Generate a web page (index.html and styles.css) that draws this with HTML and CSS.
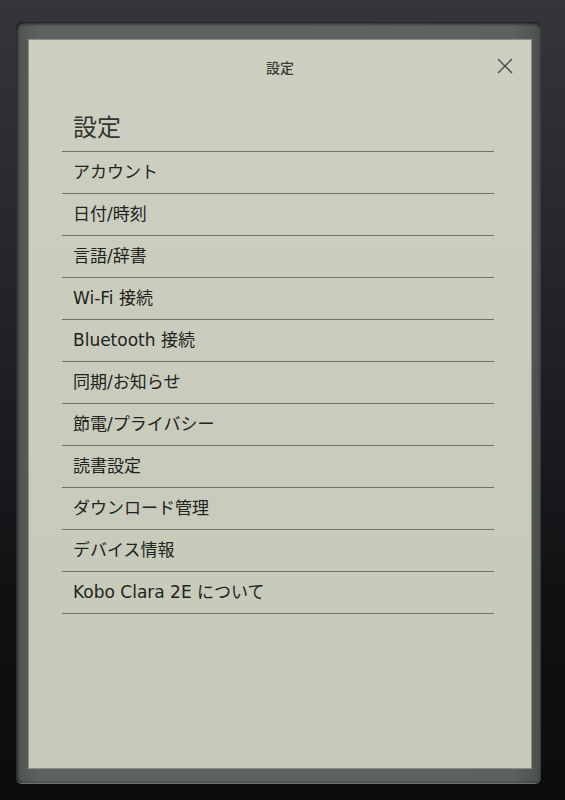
FILE: index.html
```html
<!DOCTYPE html>
<html lang="ja">
<head>
<meta charset="utf-8">
<link rel="stylesheet" href="styles.css">
</head>
<body>
<div class="device">
  <div class="bezel">
    <div class="screen">
      <div class="topbar">
        <span class="topbar-title">設定</span>
        <svg class="close" viewBox="0 0 18 18" width="18" height="18"><path d="M2 2 L16 16 M16 2 L2 16" stroke="#4a4c48" stroke-width="1.4" fill="none"/></svg>
      </div>
      <div class="list">
        <div class="heading">設定</div>
        <div class="row">アカウント</div>
        <div class="row">日付/時刻</div>
        <div class="row">言語/辞書</div>
        <div class="row">Wi-Fi 接続</div>
        <div class="row">Bluetooth 接続</div>
        <div class="row">同期/お知らせ</div>
        <div class="row">節電/プライバシー</div>
        <div class="row">読書設定</div>
        <div class="row">ダウンロード管理</div>
        <div class="row">デバイス情報</div>
        <div class="row">Kobo Clara 2E について</div>
      </div>
    </div>
  </div>
</div>
</body>
</html>
```

FILE: styles.css
```css
html, body {
  margin: 0;
  padding: 0;
  width: 565px;
  height: 800px;
  overflow: hidden;
}
body {
  background: linear-gradient(180deg, #35353a 0%, #232327 40%, #111114 75%, #0c0c0e 100%);
  font-family: "DejaVu Sans", "Noto Sans CJK JP", sans-serif;
}
.device {
  box-sizing: border-box;
  width: 565px;
  height: 800px;
  padding: 22px 24px 17px 16px;
}
.bezel {
  box-sizing: border-box;
  height: 100%;
  background: linear-gradient(90deg, #4e5250 0%, #5e6260 5%, #5c605e 95%, #4a4e4c 100%);
  border-radius: 6px;
  box-shadow: inset 0 2px 3px rgba(0,0,0,0.55), inset 2px 0 3px rgba(0,0,0,0.4), 0 1px 0 #6c706e;
  padding: 18px 10px 15px 13px;
}
.screen {
  box-sizing: border-box;
  height: 100%;
  background: linear-gradient(180deg, #cdd0c1 0%, #c9ccbc 50%, #c6cab9 100%);
  box-shadow: 0 0 0 1px #8a8e86;
  display: flex;
  flex-direction: column;
  color: #222320;
}
.topbar {
  height: 54px;
  display: flex;
  align-items: center;
  justify-content: center;
  position: relative;
}
.topbar-title {
  font-family: "Noto Sans CJK JP", sans-serif;
  font-size: 14px;
  font-weight: 500;
  color: #3a3b38;
  margin-top: -1px;
}
.close {
  position: absolute;
  right: 17px;
  top: 17px;
}
.list {
  padding: 0 37px 0 33px;
}
.heading {
  font-family: "Noto Sans CJK JP", sans-serif;
  font-size: 24px;
  color: #343532;
  height: 58px;
  box-sizing: border-box;
  padding-top: 6px;
  line-height: 52px;
  padding-left: 11px;
  border-bottom: 1.5px solid #6f716b;
}
.row {
  height: 42px;
  line-height: 41px;
  box-sizing: border-box;
  font-size: 17px;
  padding-left: 11px;
  border-bottom: 1.5px solid #6f716b;
}
```
